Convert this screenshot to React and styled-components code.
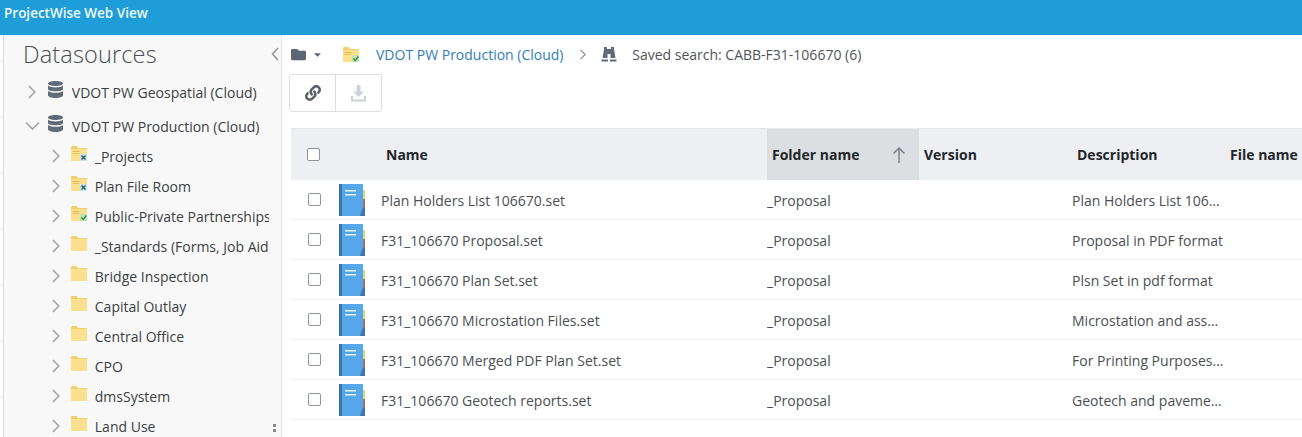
import React from "react";
import styled, { createGlobalStyle } from "styled-components";
import { FaFolder, FaCaretDown, FaLink } from "react-icons/fa";

const Global = createGlobalStyle`
  html, body { margin: 0; padding: 0; background: #fff; overflow: hidden; }
  body { font-family: "Open Sans", "Liberation Sans", sans-serif; color: #333; }
`;
const Page = styled.div`width: 1302px; height: 437px; overflow: hidden; display: flex; flex-direction: column;`;
const Header = styled.header`
  flex: 0 0 35px; height: 35px; background: #1f9dd9; color: #eef8fd; font-size: 13.5px; font-weight: 600;
  padding: 3px 0 0 4px; box-sizing: border-box; line-height: 20px;
`;
const Body = styled.div`flex: 1; min-height: 0; display: flex; align-items: stretch;`;
const LeftEdge = styled.div`
  flex: 0 0 3px; background: repeating-linear-gradient(#fff 0 25px, #e4e4e4 25px 26px, #fff 26px 56px);
`;
const Side = styled.aside`
  background: #f8f8f8; border-left: 1px solid #dedede; border-right: 1px solid #e6e6e6;
  flex: 0 0 277px; position: relative; overflow: hidden;
`;
const Title = styled.h2`
  margin: 0; padding: 2px 0 0 19px; height: 38px; font-size: 23.5px; line-height: 34px; font-weight: 300; color: #4a4f55; letter-spacing: .15px;
`;
const Collapse = styled.svg`position: absolute; left: 267px; top: 12px;`;
const Grip = styled.div`
  position: absolute; right: 5px; bottom: 3px; width: 3px; height: 10px;
  background: repeating-linear-gradient(#8a8a8a 0 3px, transparent 3px 5px);
`;
const Tree = styled.div`display: flex; flex-direction: column;`;
const Row = styled.div`
  display: flex; align-items: center; white-space: nowrap; overflow: hidden; font-size: 14px; color: #3a3f44;
  height: ${p => p.$h}px; padding-left: ${p => p.$pad}px; width: 265px; box-sizing: border-box;
`;
const ChildGroup = styled.div`display: flex; flex-direction: column; margin-top: -2px;`;
const Arrow = styled.svg`flex: 0 0 auto;`;
const IconSlot = styled.span`display: inline-flex; flex: 0 0 auto; margin: ${p => p.$m};`;
const Label = styled.span`overflow: hidden; flex: 1; min-width: 0;`;

const Main = styled.main`flex: 1; min-width: 0; padding-left: 9px; display: flex; flex-direction: column;`;
const Crumbs = styled.nav`height: 39px; display: flex; align-items: center; font-size: 14px; color: #4f5458;`;
const CrumbLink = styled.span`color: #2f80b8; margin: 0 15px 0 17px;`;
const SearchText = styled.span`margin-left: 15px;`;
const Toolbar = styled.div`
  display: flex; width: 93px; height: 38px; box-sizing: border-box; border: 1px solid #dcdfe2; border-radius: 3px; margin-left: -2px;
`;
const ToolBtn = styled.div`
  flex: 1; display: flex; align-items: center; justify-content: center; color: ${p => p.$off ? "#ced2d6" : "#5a6068"};
  & + & { border-left: 1px solid #dcdfe2; }
`;
const Table = styled.div`margin-top: 16px; font-size: 14px; width: 1011px;`;
const cols = "90px 386px 152px 153px 153px 77px";
const HeadRow = styled.div`
  display: grid; grid-template-columns: ${cols}; height: 52px; background: #eeeff2; border-top: 1px solid #e4e6e8; box-sizing: border-box;
  font-weight: 700; color: #22262a; align-items: stretch;
`;
const HeadCell = styled.div`
  display: flex; align-items: center; justify-content: space-between; padding: 0 13px 0 5px; white-space: nowrap; overflow: hidden;
  background: ${p => p.$sorted ? "#dcdfe2" : "transparent"};
`;
const CheckCell = styled.div`display: flex; align-items: center; padding-left: ${p => p.$pad}px;`;
const Check = styled.span`
  width: 13px; height: 13px; box-sizing: border-box; border: 1px solid #8f9499; border-radius: 2px; background: #fff; display: block;
`;
const DataRow = styled.div`
  display: grid; grid-template-columns: ${cols}; height: 40px; box-sizing: border-box; border-bottom: 1px solid #eceef0;
  color: #4a4f54; align-items: center; background: #fff;
`;
const NameCell = styled.div`padding: 1px 0 0 0; white-space: nowrap; overflow: hidden;`;
const TextCell = styled.div`padding: 1px 0 0 0; white-space: nowrap; overflow: hidden; text-overflow: ellipsis; width: ${p => p.$w || "auto"};`;
const ChevR = ({ c = "#a3a6a9", s = 14 }) => (
  <Arrow width={s * .7} height={s} viewBox="0 0 10 14" fill="none" stroke={c} strokeWidth="1.6"><path d="M2 1l6 6-6 6" /></Arrow>
);
const ChevD = () => (
  <Arrow width="15" height="10" viewBox="0 0 15 10" fill="none" stroke="#a3a6a9" strokeWidth="1.6"><path d="M1 1.5l6.5 6.5 6.5-6.5" /></Arrow>
);
const Db = () => (
  <svg width="15" height="17" viewBox="0 0 15 17"><g fill="#5f6b77">
    <path d="M0 2.5C0 1 3.4 0 7.5 0S15 1 15 2.5 11.6 5 7.5 5 0 4 0 2.5z"/>
    <path d="M0 4.6C1.5 6 4.5 6.5 7.5 6.5S13.5 6 15 4.6V8c0 1.3-3.4 2.3-7.5 2.3S0 9.300 0 8z"/>
    <path d="M0 10c1.500 1.300 4.500 1.800 7.500 1.800S13.500 11.300 15 10v4.300C15 15.800 11.600 17 7.500 17S0 15.800 0 14.300z"/>
  </g></svg>
);
const Binoculars = () => (
  <svg width="16" height="15" viewBox="0 0 16 15" fill="#5f6b77">
    <path d="M3 0h3v2h4V0h3v2.500l1.500 8.500H9.500V7h-3v4H1.500L3 2.500z"/>
    <rect x="0.500" y="12.500" width="6.500" height="2"/>
    <rect x="9" y="12.500" width="6.500" height="2"/>
  </svg>
);
const Folder = ({ badge, w = 16, h = 15 }) => (
  <svg width={w} height={h} viewBox="0 0 16 15">
    <path d="M0 1.500C0 .7.500 0 1.200 0h4.300l1.500 2H16v13H0z" fill="#f3cf6b"/>
    <path d="M0 3h16v12H0z" fill="#fbe08f"/>
    {badge && <><path d="M1.500 5h7v.9h-7zM1.500 7.200h7v.9h-7z" fill="#e0b64e"/>
      <rect x="9" y="8" width="7" height="7" fill={badge === "g" ? "#bfe3b4" : "#cfe0e6"}/>
      <path d={badge === "g" ? "M10.300 11.500l2 2 3-4" : "M10.500 9.500l4 4M14.500 9.500l-4 4"} fill="none" stroke={badge === "g" ? "#2f8f3a" : "#1f5f68"} strokeWidth="1.400"/></>}
  </svg>
);
const Book = () => (
  <svg width="26" height="32" viewBox="0 0 26 32">
    <rect x="0" y="0" width="3" height="32" fill="#3a77a8"/>
    <rect x="3" y="0" width="21" height="32" fill="#55a7ea"/>
    <path d="M6 6h11v1.500H6zM6 10h11v1.500H6z" fill="#e8f4fc"/>
    <rect x="24" y="6" width="2" height="9" fill="#d7d97a"/>
    <rect x="24" y="15" width="2" height="8" fill="#b26a5a"/>
    <path d="M21 32l3-9h2v9z" fill="#3f78a8"/>
  </svg>
);
const tree = [
  ["_Projects", "b"], ["Plan File Room", "b"], ["Public-Private Partnerships", "g"], ["_Standards (Forms, Job Aids)"],
  ["Bridge Inspection"], ["Capital Outlay"], ["Central Office"], ["CPO"], ["dmsSystem"], ["Land Use"],
];
const rows = [
  ["Plan Holders List 106670.set", "Plan Holders List 106670"],
  ["F31_106670 Proposal.set", "Proposal in PDF format"],
  ["F31_106670 Plan Set.set", "Plsn Set in pdf format"],
  ["F31_106670 Microstation Files.set", "Microstation and associated"],
  ["F31_106670 Merged PDF Plan Set.set", "For Printing Purposes only"],
  ["F31_106670 Geotech reports.set", "Geotech and pavement data"],
];
export default function App() {
  return (
    <Page>
      <Global />
      <Header>ProjectWise Web View</Header>
      <Body>
        <LeftEdge />
        <Side>
          <Title>Datasources</Title>
          <Collapse width="8" height="14" viewBox="0 0 8 14" fill="none" stroke="#8e9296" strokeWidth="1.400"><path d="M7 1L1.500 7 7 13" /></Collapse>
          <Tree>
            <Row $h={34} $pad={23}>
              <ChevR /><IconSlot $m="-6px 9px 0 11px"><Db /></IconSlot><Label>VDOT PW Geospatial (Cloud)</Label>
            </Row>
            <Row $h={34} $pad={21}>
              <ChevD /><IconSlot $m="-6px 9px 0 8px"><Db /></IconSlot><Label>VDOT PW Production (Cloud)</Label>
            </Row>
            <ChildGroup>
              {tree.map(([t, b]) => (
                <Row key={t} $h={30} $pad={47}>
                  <ChevR /><IconSlot $m="-6px 8px 0 10px"><Folder badge={b} /></IconSlot><Label>{t}</Label>
                </Row>
              ))}
            </ChildGroup>
          </Tree>
          <Grip />
        </Side>
        <Main>
          <Crumbs>
            <FaFolder size={15} color="#5b6672" />
            <FaCaretDown size={11} color="#5b6672" style={{ marginLeft: 6 }} />
            <IconSlot $m="0 0 0 20px"><Folder badge="g" /></IconSlot>
            <CrumbLink>VDOT PW Production (Cloud)</CrumbLink>
            <ChevR c="#8e9296" s={11} />
            <IconSlot $m="0 0 0 15px"><Binoculars /></IconSlot>
            <SearchText>Saved search: CABB-F31-106670 (6)</SearchText>
          </Crumbs>
          <Toolbar>
            <ToolBtn><FaLink size={16} /></ToolBtn>
            <ToolBtn $off>
              <svg width="17" height="17" viewBox="0 0 17 17" fill="currentColor"><path d="M6.500 0h4v6.500H14l-5.500 5.500L3 6.500h3.500zM1 11h2v3.500h11V11h2v5.500H1z"/></svg>
            </ToolBtn>
          </Toolbar>
          <Table>
            <HeadRow>
              <CheckCell $pad={16}><Check /></CheckCell>
              <HeadCell>Name</HeadCell>
              <HeadCell $sorted>Folder name
                <svg width="14" height="16" viewBox="0 0 14 16" fill="none" stroke="#7b8187" strokeWidth="1.500"><path d="M7 16V1M1.500 6.500L7 1l5.500 5.500"/></svg>
              </HeadCell>
              <HeadCell>Version</HeadCell>
              <HeadCell>Description</HeadCell>
              <HeadCell>File name</HeadCell>
            </HeadRow>
            {rows.map(([n, d]) => (
              <DataRow key={n}>
                <CheckCell $pad={17}><Check /><IconSlot $m="0 0 0 18px"><Book /></IconSlot></CheckCell>
                <NameCell>{n}</NameCell>
                <TextCell>_Proposal</TextCell>
                <TextCell />
                <TextCell $w="153px">{d}</TextCell>
                <TextCell />
              </DataRow>
            ))}
          </Table>
        </Main>
      </Body>
    </Page>
  );
}
